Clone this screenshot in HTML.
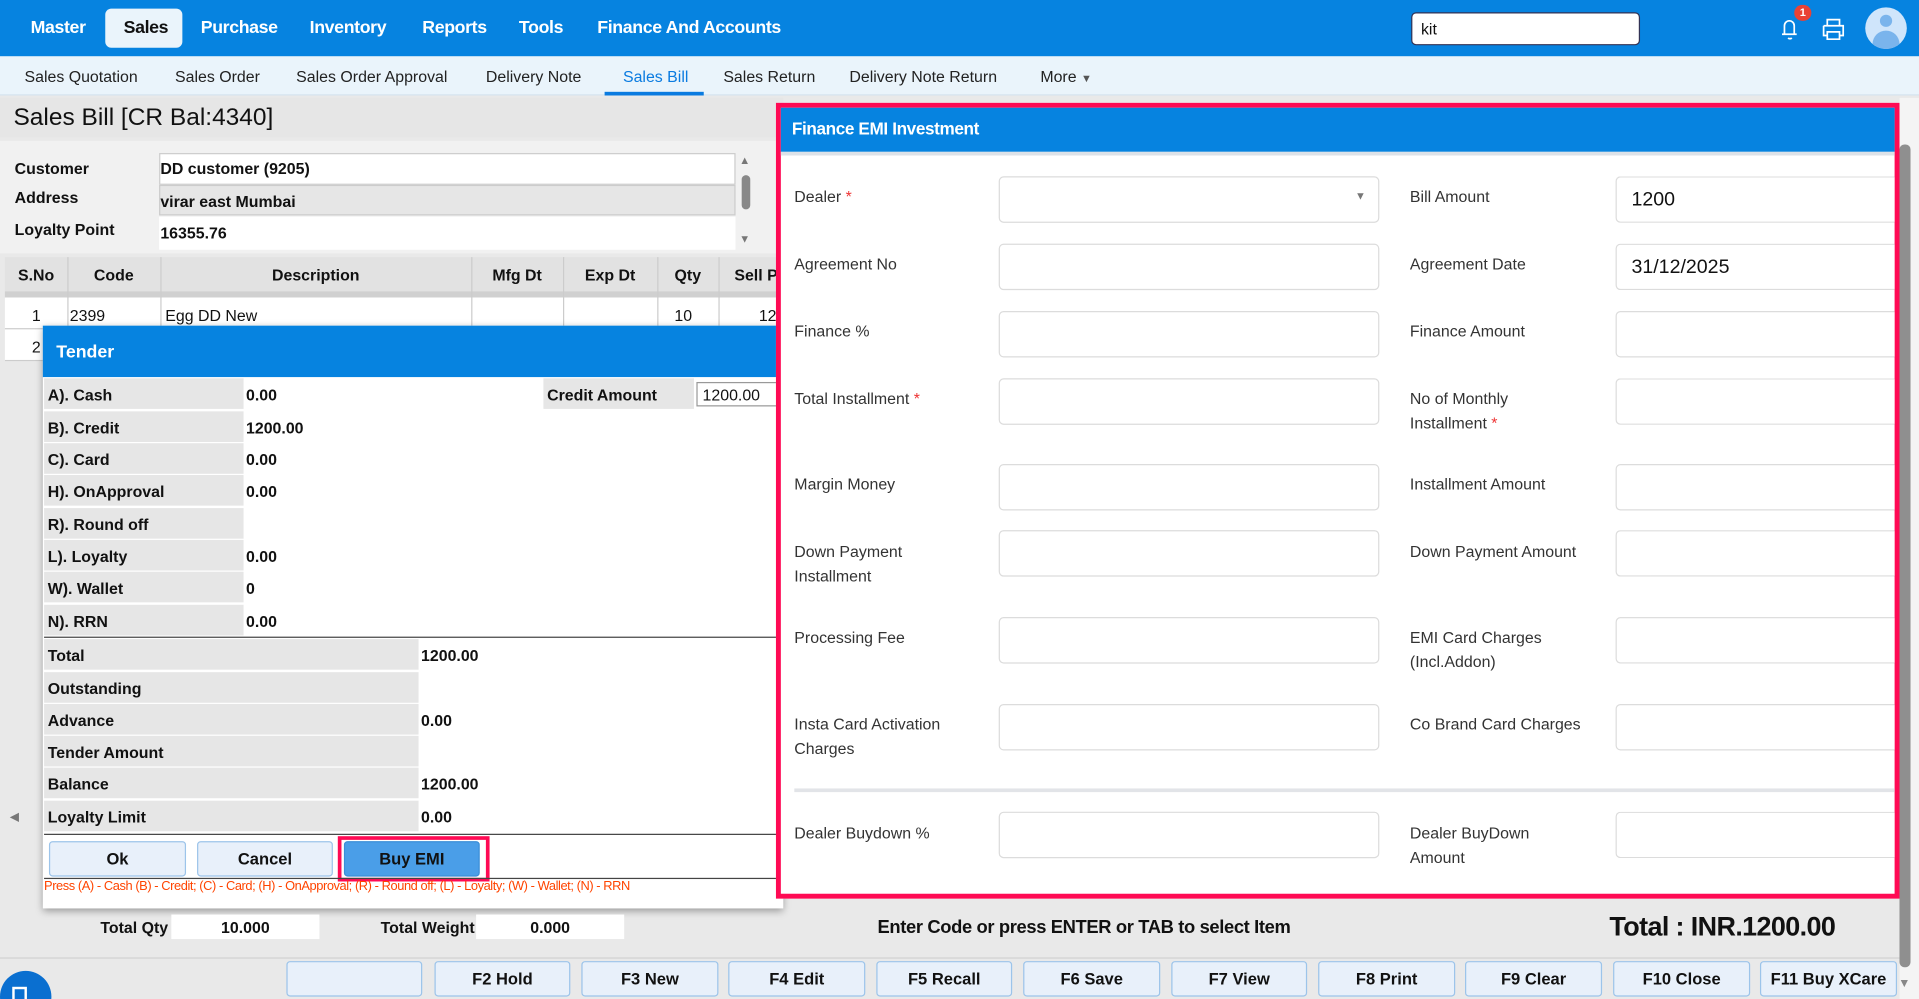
<!DOCTYPE html>
<html><head><meta charset="utf-8"><style>
*{box-sizing:border-box;margin:0;padding:0}
html,body{width:1919px;height:999px;overflow:hidden;background:#fff}
#w{position:absolute;left:0;top:0;width:1568px;height:816px;transform:scale(1.2239,1.2243);transform-origin:0 0;font-family:"Liberation Sans",sans-serif;color:#111;background:#e9e9e9;overflow:hidden}
.a{position:absolute}
.top{left:0;top:0;width:1568px;height:46px;background:#0683e0}
.nv{top:15px;color:#fff;font-weight:bold;font-size:14.5px;letter-spacing:-0.3px}
.sub{left:0;top:46px;width:1568px;height:32px;background:#eaf4fb;border-bottom:1px solid #d5e3ee}
.sn{top:55px;font-size:13px;color:#222}
.lbl{font-size:13px}
.t13{font-size:13px}
.b{font-weight:bold}
.hd{font-size:13px;font-weight:bold;text-align:center;top:217px}
.tr{left:36px;width:598px;height:26px}
.tl{position:absolute;left:0;top:0;width:163px;height:25px;background:#e6e6e6;font-size:13px;font-weight:bold;padding:6px 0 0 3px}
.tv{position:absolute;left:165px;top:6px;font-size:13px;font-weight:bold}
.tl2{width:306px}
.tv2{left:308px}
.btn{height:29px;background:#e8f0fa;border:1px solid #9cc4ea;border-radius:3px;text-align:center;font-size:13.5px;font-weight:bold;padding-top:6px}
.fl{left:649px;font-size:13px;color:#333;line-height:20px}
.fr{left:1152px;font-size:13px;color:#333;line-height:20px}
.in1{left:816px;width:311px;height:38px;border:1px solid #dcdcdc;border-radius:4px;background:#fff}
.in2{left:1320px;width:228px;height:38px;border:1px solid #dcdcdc;border-right:none;border-radius:4px 0 0 4px;background:#fff}
.req{color:#e33}
.fb{top:785px;height:29px}
.vl{width:1px;background:#ccc}
</style></head><body><div id="w">
<div class="a top"></div>
<div class="a nv" style="left:25px">Master</div>
<div class="a" style="left:86px;top:7px;width:63px;height:32px;background:#eaf4fb;border-radius:5px"></div>
<div class="a nv" style="left:101px;color:#111">Sales</div>
<div class="a nv" style="left:164px">Purchase</div>
<div class="a nv" style="left:253px">Inventory</div>
<div class="a nv" style="left:345px">Reports</div>
<div class="a nv" style="left:424px">Tools</div>
<div class="a nv" style="left:488px">Finance And Accounts</div>
<div class="a" style="left:1153px;top:10px;width:187px;height:27px;background:#fff;border:1px solid #335;border-radius:4px;font-size:13px;padding:5px 0 0 7px">kit</div>
<svg class="a" style="left:1450px;top:10px" width="26" height="26" viewBox="0 0 26 26"><path d="M6 18h12M8 18V11a4 4 0 0 1 8 0v7M11 21a2 2 0 0 0 3 0" fill="none" stroke="#fff" stroke-width="1.4"/></svg>
<div class="a" style="left:1466px;top:4px;width:14px;height:13px;border-radius:7px;background:#e94235;color:#fff;font-size:9px;text-align:center;line-height:13px;font-weight:bold">1</div>
<svg class="a" style="left:1487px;top:13px" width="22" height="22" viewBox="0 0 22 22"><path d="M6 8V3h10v5M3 8h16v8h-3M6 16H3V8M6 13h10v6H6z" fill="none" stroke="#fff" stroke-width="1.4"/></svg>
<div class="a" style="left:1524px;top:6px;width:34px;height:34px;border-radius:17px;background:#cfe5fb;overflow:hidden"><div class="a" style="left:12px;top:6px;width:10px;height:10px;border-radius:5px;background:#7ab4ec"></div><div class="a" style="left:6px;top:19px;width:22px;height:18px;border-radius:11px 11px 0 0;background:#7ab4ec"></div></div>
<div class="a sub"></div>
<div class="a sn" style="left:20px">Sales Quotation</div>
<div class="a sn" style="left:143px">Sales Order</div>
<div class="a sn" style="left:242px">Sales Order Approval</div>
<div class="a sn" style="left:397px">Delivery Note</div>
<div class="a sn" style="left:509px;color:#0a7be0">Sales Bill</div>
<div class="a" style="left:494px;top:75px;width:81px;height:3px;background:#0a7be0"></div>
<div class="a sn" style="left:591px">Sales Return</div>
<div class="a sn" style="left:694px">Delivery Note Return</div>
<div class="a sn" style="left:850px">More <span style="font-size:9px;color:#555">▼</span></div>
<div class="a" style="left:1552px;top:80px;width:16px;height:736px;background:#f4f4f4"></div>
<div class="a" style="left:1552px;top:118px;width:9px;height:672px;border-radius:4px;background:#8f8f8f"></div>
<div class="a" style="left:1551px;top:798px;font-size:10px;color:#888">▼</div>
<div class="a" style="left:0;top:80px;width:640px;height:32px;background:#e6e6e6"></div>
<div class="a" style="left:11px;top:85px;font-size:20px">Sales Bill [CR Bal:4340]</div>
<div class="a" style="left:0;top:115px;width:640px;height:92px;background:#f1f1f1"></div>
<div class="a lbl b" style="left:12px;top:130px">Customer</div>
<div class="a lbl b" style="left:12px;top:154px">Address</div>
<div class="a lbl b" style="left:12px;top:180px">Loyalty Point</div>
<div class="a" style="left:130px;top:125px;width:471px;height:26px;background:#fff;border:1px solid #ccc"></div>
<div class="a" style="left:130px;top:151px;width:471px;height:25px;background:#e6e6e6;border:1px solid #ccc"></div>
<div class="a" style="left:130px;top:177px;width:471px;height:27px;background:#fff"></div>
<div class="a t13 b" style="left:131px;top:130px">DD customer (9205)</div>
<div class="a t13 b" style="left:131px;top:157px">virar east Mumbai</div>
<div class="a t13 b" style="left:131px;top:183px">16355.76</div>
<div class="a" style="left:606px;top:143px;width:7px;height:28px;border-radius:4px;background:#888"></div>
<div class="a" style="left:604px;top:126px;font-size:9px;color:#777">▲</div>
<div class="a" style="left:604px;top:190px;font-size:9px;color:#777">▼</div>
<div class="a" style="left:4px;top:210px;width:636px;height:28px;background:#e2e2e2"></div>
<div class="a" style="left:4px;top:238px;width:636px;height:5px;background:#d0d0d0"></div>
<div class="a" style="left:4px;top:243px;width:636px;height:52px;background:#fff;border-bottom:1px solid #ccc"></div>
<div class="a vl" style="left:55px;top:210px;height:85px"></div>
<div class="a vl" style="left:131px;top:210px;height:85px"></div>
<div class="a vl" style="left:385px;top:210px;height:85px"></div>
<div class="a vl" style="left:460px;top:210px;height:85px"></div>
<div class="a vl" style="left:537px;top:210px;height:85px"></div>
<div class="a vl" style="left:587px;top:210px;height:85px"></div>
<div class="a" style="left:4px;top:268px;width:636px;height:1px;background:#ccc"></div>
<div class="a hd" style="left:4px;width:51px">S.No</div>
<div class="a hd" style="left:55px;width:76px">Code</div>
<div class="a hd" style="left:131px;width:254px">Description</div>
<div class="a hd" style="left:385px;width:75px">Mfg Dt</div>
<div class="a hd" style="left:460px;width:77px">Exp Dt</div>
<div class="a hd" style="left:537px;width:50px">Qty</div>
<div class="a hd" style="left:587px;width:53px;text-align:left;padding-left:13px">Sell P</div>
<div class="a t13" style="left:26px;top:250px">1</div>
<div class="a t13" style="left:57px;top:250px">2399</div>
<div class="a t13" style="left:135px;top:250px">Egg DD New</div>
<div class="a t13" style="left:551px;top:250px">10</div>
<div class="a t13" style="left:620px;top:250px">12</div>
<div class="a t13" style="left:26px;top:276px">2</div>
<div class="a" style="left:8px;top:662px;font-size:10px;color:#777">◀</div>
<!-- Tender -->
<div class="a" style="left:35px;top:266px;width:605px;height:476px;background:#fff;box-shadow:0 2px 6px rgba(0,0,0,.35)"></div>
<div class="a" style="left:35px;top:266px;width:605px;height:42px;background:#0683e0"></div>
<div class="a b" style="left:46px;top:280px;font-size:14.5px;color:#fff">Tender</div>
<div class="a tr" style="top:309px"><div class="tl">A). Cash</div><div class="tv">0.00</div></div>
<div class="a tr" style="top:336px"><div class="tl">B). Credit</div><div class="tv">1200.00</div></div>
<div class="a tr" style="top:362px"><div class="tl">C). Card</div><div class="tv">0.00</div></div>
<div class="a tr" style="top:388px"><div class="tl">H). OnApproval</div><div class="tv">0.00</div></div>
<div class="a tr" style="top:415px"><div class="tl">R). Round off</div></div>
<div class="a tr" style="top:441px"><div class="tl">L). Loyalty</div><div class="tv">0.00</div></div>
<div class="a tr" style="top:467px"><div class="tl">W). Wallet</div><div class="tv">0</div></div>
<div class="a tr" style="top:494px"><div class="tl">N). RRN</div><div class="tv">0.00</div></div>
<div class="a" style="left:444px;top:309px;width:123px;height:25px;background:#e6e6e6;font-size:13px;font-weight:bold;padding:6px 0 0 3px">Credit Amount</div>
<div class="a" style="left:569px;top:312px;width:70px;height:20px;border:1px solid #999;font-size:13px;padding:2px 0 0 4px">1200.00</div>
<div class="a" style="left:36px;top:520px;width:604px;height:1px;background:#444"></div>
<div class="a tr" style="top:522px"><div class="tl tl2">Total</div><div class="tv tv2">1200.00</div></div>
<div class="a tr" style="top:549px"><div class="tl tl2">Outstanding</div></div>
<div class="a tr" style="top:575px"><div class="tl tl2">Advance</div><div class="tv tv2">0.00</div></div>
<div class="a tr" style="top:601px"><div class="tl tl2">Tender Amount</div></div>
<div class="a tr" style="top:627px"><div class="tl tl2">Balance</div><div class="tv tv2">1200.00</div></div>
<div class="a tr" style="top:654px"><div class="tl tl2">Loyalty Limit</div><div class="tv tv2">0.00</div></div>
<div class="a" style="left:36px;top:681px;width:604px;height:1px;background:#444"></div>
<div class="a btn" style="left:40px;top:687px;width:112px">Ok</div>
<div class="a btn" style="left:161px;top:687px;width:111px">Cancel</div>
<div class="a" style="left:276px;top:683px;width:124px;height:37px;border:3px solid #ff0a54"></div>
<div class="a btn" style="left:281px;top:687px;width:111px;background:#4a9ee8;border-color:#3a8ed8">Buy EMI</div>
<div class="a" style="left:36px;top:717px;width:604px;height:1px;background:#444"></div>
<div class="a" style="left:36px;top:718px;font-size:10.5px;color:#ff4400;letter-spacing:-0.35px">Press (A) - Cash (B) - Credit; (C) - Card; (H) - OnApproval; (R) - Round off; (L) - Loyalty; (W) - Wallet; (N) - RRN</div>
<!-- Finance panel -->
<div class="a" style="left:634px;top:84px;width:918px;height:650px;background:#fff;border:4px solid #ff0a54"></div>
<div class="a" style="left:638px;top:88px;width:910px;height:36px;background:#0683e0"></div>
<div class="a" style="left:638px;top:124px;width:910px;height:3px;background:#dde2e8"></div>
<div class="a b" style="left:647px;top:97px;font-size:14px;color:#fff;letter-spacing:-0.3px">Finance EMI Investment</div>
<div class="a fl" style="top:151px">Dealer <span class="req">*</span></div>
<div class="a in1" style="top:144px"><span class="a" style="right:10px;top:10px;font-size:9px;color:#777">▼</span></div>
<div class="a fr" style="top:151px">Bill Amount</div>
<div class="a in2" style="top:144px;font-size:16px;padding:10px 0 0 12px">1200</div>
<div class="a fl" style="top:206px">Agreement No</div><div class="a in1" style="top:199px"></div>
<div class="a fr" style="top:206px">Agreement Date</div><div class="a in2" style="top:199px;font-size:16px;padding:10px 0 0 12px">31/12/2025</div>
<div class="a fl" style="top:261px">Finance %</div><div class="a in1" style="top:254px"></div>
<div class="a fr" style="top:261px">Finance Amount</div><div class="a in2" style="top:254px"></div>
<div class="a fl" style="top:316px">Total Installment <span class="req">*</span></div><div class="a in1" style="top:309px"></div>
<div class="a fr" style="top:316px">No of Monthly<br>Installment <span class="req">*</span></div><div class="a in2" style="top:309px"></div>
<div class="a fl" style="top:386px">Margin Money</div><div class="a in1" style="top:379px"></div>
<div class="a fr" style="top:386px">Installment Amount</div><div class="a in2" style="top:379px"></div>
<div class="a fl" style="top:441px">Down Payment<br>Installment</div><div class="a in1" style="top:433px"></div>
<div class="a fr" style="top:441px">Down Payment Amount</div><div class="a in2" style="top:433px"></div>
<div class="a fl" style="top:511px">Processing Fee</div><div class="a in1" style="top:504px"></div>
<div class="a fr" style="top:511px">EMI Card Charges<br>(Incl.Addon)</div><div class="a in2" style="top:504px"></div>
<div class="a fl" style="top:582px">Insta Card Activation<br>Charges</div><div class="a in1" style="top:575px"></div>
<div class="a fr" style="top:582px">Co Brand Card Charges</div><div class="a in2" style="top:575px"></div>
<div class="a" style="left:649px;top:644px;width:899px;height:3px;background:#e2e4e8"></div>
<div class="a fl" style="top:671px">Dealer Buydown %</div><div class="a in1" style="top:663px"></div>
<div class="a fr" style="top:671px">Dealer BuyDown<br>Amount</div><div class="a in2" style="top:663px"></div>
<!-- footer -->
<div class="a t13 b" style="left:82px;top:750px">Total Qty</div>
<div class="a" style="left:140px;top:747px;width:121px;height:20px;background:#fff;font-size:13px;font-weight:bold;text-align:center;padding-top:3px">10.000</div>
<div class="a t13 b" style="left:311px;top:750px">Total Weight</div>
<div class="a" style="left:389px;top:747px;width:121px;height:20px;background:#fff;font-size:13px;font-weight:bold;text-align:center;padding-top:3px">0.000</div>
<div class="a b" style="left:717px;top:749px;font-size:15px;letter-spacing:-0.3px">Enter Code or press ENTER or TAB to select Item</div>
<div class="a b" style="left:1315px;top:744px;font-size:22px;letter-spacing:-0.5px">Total : INR.1200.00</div>
<div class="a" style="left:0;top:782px;width:1552px;height:1px;background:#d2d2d2"></div>
<div class="a btn fb" style="left:234px;width:111px"></div>
<div class="a btn fb" style="left:355px;width:111px">F2 Hold</div>
<div class="a btn fb" style="left:475px;width:112px">F3 New</div>
<div class="a btn fb" style="left:595px;width:112px">F4 Edit</div>
<div class="a btn fb" style="left:716px;width:111px">F5 Recall</div>
<div class="a btn fb" style="left:836px;width:112px">F6 Save</div>
<div class="a btn fb" style="left:957px;width:111px">F7 View</div>
<div class="a btn fb" style="left:1077px;width:112px">F8 Print</div>
<div class="a btn fb" style="left:1197px;width:112px">F9 Clear</div>
<div class="a btn fb" style="left:1318px;width:112px">F10 Close</div>
<div class="a btn fb" style="left:1438px;width:112px">F11 Buy XCare</div>
<div class="a" style="left:0;top:793px;width:42px;height:42px;border-radius:21px;background:#0a6fd0"></div>
<div class="a" style="left:10px;top:806px;width:12px;height:12px;border:2px solid #fff;background:#0a6fd0"></div>
</div></body></html>
